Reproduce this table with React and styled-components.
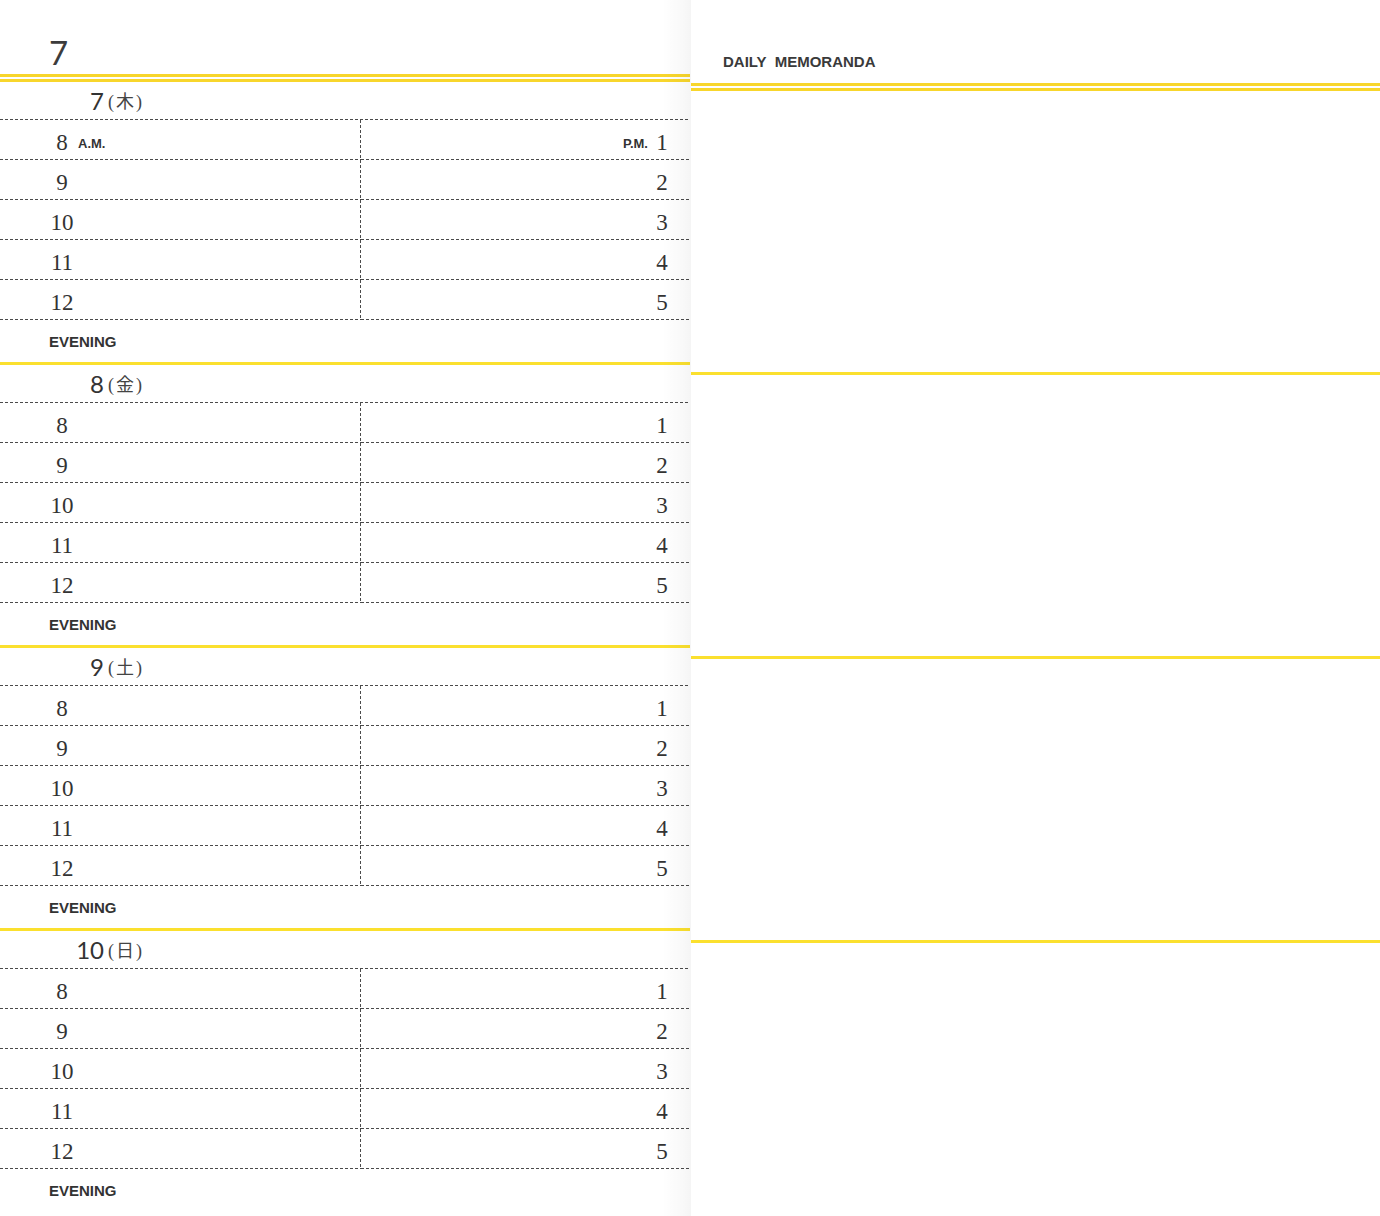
import React from "react";
import styled, { createGlobalStyle } from "styled-components";

const YELLOW = "#fbe02e";
const INK = "#3a3a3a";
const DASH = "repeating-linear-gradient(to right, #4a4a4a 0 3px, transparent 3px 5px)";
const VDASH = "repeating-linear-gradient(to bottom, #4a4a4a 0 3px, transparent 3px 5px)";

const Global = createGlobalStyle`
  html, body { margin: 0; padding: 0; background: #ffffff; }
  body { font-family: "Liberation Sans", Arial, sans-serif; color: ${INK}; }
`;

const Spread = styled.div`
  display: grid;
  grid-template-columns: 690px 690px;
  width: 1380px;
  height: 1216px;
  overflow: hidden;
  background: #ffffff;
`;

const LeftPage = styled.section`
  position: relative;
  display: flex;
  flex-direction: column;
  &::after {
    content: "";
    position: absolute;
    top: 0;
    right: 0;
    bottom: 0;
    width: 28px;
    background: linear-gradient(to right, rgba(0,0,0,0) 0%, rgba(0,0,0,0.025) 70%, rgba(0,0,0,0.04) 100%);
    pointer-events: none;
  }
`;

const RightPage = styled.section`
  display: flex;
  flex-direction: column;
  border-left: 1px solid rgba(0, 0, 0, 0.04);
`;

const MonthBar = styled.header`
  height: 74px;
  box-sizing: border-box;
  display: flex;
  align-items: flex-end;
  padding: 0 0 5px 49px;
  font-family: "Lato", "Liberation Sans", sans-serif;
  font-weight: 400;
  font-size: 33px;
  line-height: 1;
  color: #3c3c3c;
`;

const DoubleRule = styled.div`
  height: 8px;
  box-sizing: border-box;
  border-top: 3px solid #f8d62c;
  border-bottom: 3px solid #f8d62c;
`;

const DayBlock = styled.div`
  display: flex;
  flex-direction: column;
`;

const DayHeader = styled.div`
  height: 37px;
  display: flex;
  align-items: center;
  padding-left: 54px;
  padding-top: 1px;
  box-sizing: border-box;
`;

const DayNum = styled.span`
  width: 50px;
  text-align: right;
  font-family: "Lato", "Liberation Sans", sans-serif;
  font-weight: 400;
  font-size: 24px;
  line-height: 1;
  color: #333;
`;

const Weekday = styled.span`
  margin-left: 4px;
  font-family: "Liberation Serif", "Noto Sans CJK JP", serif;
  font-size: 18px;
  letter-spacing: 2px;
  line-height: 1;
  color: #444;
  position: relative;
  top: 1px;
`;

const HourGrid = styled.div`
  display: grid;
  grid-template-columns: 361px 1fr;
  padding-top: 1px;
  background: ${DASH} top left / 100% 1px no-repeat;
`;

const HourCell = styled.div`
  height: 40px;
  box-sizing: border-box;
  display: flex;
  align-items: center;
  justify-content: ${(p) => (p.$side === "left" ? "flex-start" : "flex-end")};
  padding: ${(p) => (p.$side === "left" ? "4px 0 0 47px" : "4px 18px 0 0")};
  background: ${(p) =>
    p.$side === "left"
      ? `${DASH} bottom left / 100% 1px no-repeat, ${VDASH} top right / 1px 100% no-repeat`
      : `${DASH} bottom left / 100% 1px no-repeat`};
`;

const HourNum = styled.span`
  width: ${(p) => (p.$narrow ? "20px" : "30px")};
  text-align: center;
  font-family: "Liberation Serif", "DejaVu Serif", serif;
  font-size: 23px;
  line-height: 1;
  color: #333;
`;

const Meridiem = styled.span`
  font-family: "Liberation Sans", Arial, sans-serif;
  font-weight: 700;
  font-size: 13px;
  color: #333;
  margin: ${(p) => (p.$after ? "2px 0 0 1px" : "2px 4px 0 0")};
`;

const Evening = styled.div`
  height: 42px;
  display: flex;
  align-items: center;
  padding-left: 49px;
  font-family: "Liberation Sans", Arial, sans-serif;
  font-weight: 700;
  font-size: 15px;
  color: #333;
`;

const YellowRule = styled.div`
  height: 3px;
  background: ${YELLOW};
`;

const MemoTitle = styled.header`
  height: 83px;
  box-sizing: border-box;
  display: flex;
  align-items: flex-end;
  padding: 0 0 14px 32px;
  font-family: "Liberation Sans", Arial, sans-serif;
  font-weight: 700;
  font-size: 15px;
  line-height: 1;
  color: #3a3a3a;
  white-space: pre;
`;

const MemoSpace = styled.div`
  height: 281px;
  border-bottom: 3px solid ${YELLOW};
`;

const days = [
  { d: "7", w: "木" },
  { d: "8", w: "金" },
  { d: "9", w: "土" },
  { d: "10", w: "日" },
];

const am = ["8", "9", "10", "11", "12"];
const pm = ["1", "2", "3", "4", "5"];

function Day({ day, first, last }) {
  return (
    <DayBlock>
      <DayHeader>
        <DayNum>{day.d}</DayNum>
        <Weekday>({day.w})</Weekday>
      </DayHeader>
      <HourGrid>
        {am.map((h, i) => (
          <React.Fragment key={h}>
            <HourCell $side="left">
              <HourNum>{h}</HourNum>
              {first && i === 0 && <Meridiem $after>A.M.</Meridiem>}
            </HourCell>
            <HourCell $side="right">
              {first && i === 0 && <Meridiem>P.M.</Meridiem>}
              <HourNum $narrow>{pm[i]}</HourNum>
            </HourCell>
          </React.Fragment>
        ))}
      </HourGrid>
      <Evening>EVENING</Evening>
      {!last && <YellowRule />}
    </DayBlock>
  );
}

export default function App() {
  return (
    <>
      <Global />
      <Spread>
        <LeftPage>
          <MonthBar>7</MonthBar>
          <DoubleRule />
          {days.map((day, i) => (
            <Day key={day.d} day={day} first={i === 0} last={i === days.length - 1} />
          ))}
        </LeftPage>
        <RightPage>
          <MemoTitle>{"DAILY  MEMORANDA"}</MemoTitle>
          <DoubleRule />
          <MemoSpace />
          <MemoSpace />
          <MemoSpace />
        </RightPage>
      </Spread>
    </>
  );
}
